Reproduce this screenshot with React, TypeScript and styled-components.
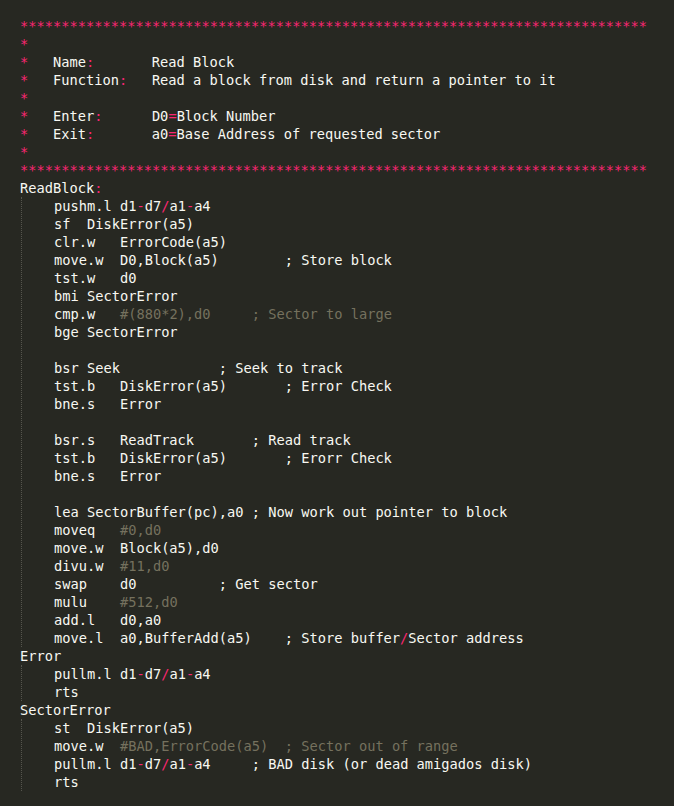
import React from "react";
import styled, { createGlobalStyle } from "styled-components";

const GlobalStyle = createGlobalStyle`
  html, body {
    margin: 0;
    padding: 0;
    background: #272822;
  }
`;

const Editor = styled.div`
  background: #272822;
  min-height: 806px;
  box-sizing: border-box;
  padding: 17px 0 0 20px;
  font-family: "DejaVu Sans Mono", "Liberation Mono", monospace;
  font-size: 13.7px;
  line-height: 18px;
  color: #f8f8f2;
  white-space: pre;
`;

const Line = styled.div`
  height: 18px;
`;

const IndentBlock = styled.div`
  margin-left: 1px;
  padding-left: 32px;
  border-left: 1px dotted #55554d;
`;

const Tok = styled.span<{ $kind: "op" | "comment" | "text" }>`
  color: ${(p) =>
    p.$kind === "op" ? "#f92672" : p.$kind === "comment" ? "#75715e" : "#f8f8f2"};
`;

type Seg = { kind: "op" | "comment" | "text"; text: string };

function tokenize(line: string): Seg[] {
  const segs: Seg[] = [];
  let buf = "";
  const flush = () => {
    if (buf) segs.push({ kind: "text", text: buf });
    buf = "";
  };
  for (let i = 0; i < line.length; i++) {
    const c = line[i];
    if (c === "#") {
      flush();
      segs.push({ kind: "comment", text: line.slice(i) });
      return segs;
    }
    if ("*:=-/".includes(c)) {
      flush();
      segs.push({ kind: "op", text: c });
    } else {
      buf += c;
    }
  }
  flush();
  return segs;
}

const CodeLine: React.FC<{ text: string }> = ({ text }) => (
  <Line>
    {text === ""
      ? " "
      : tokenize(text).map((s, i) => (
          <Tok key={i} $kind={s.kind}>
            {s.text}
          </Tok>
        ))}
  </Line>
);

const stars = "*".repeat(76);

const header = [
  stars,
  "*",
  "*   Name:       Read Block",
  "*   Function:   Read a block from disk and return a pointer to it",
  "*",
  "*   Enter:      D0=Block Number",
  "*   Exit:       a0=Base Address of requested sector",
  "*",
  stars,
];

type Section = { label: string; body: string[] };

const sections: Section[] = [
  {
    label: "ReadBlock:",
    body: [
      "pushm.l d1-d7/a1-a4",
      "sf  DiskError(a5)",
      "clr.w   ErrorCode(a5)",
      "move.w  D0,Block(a5)        ; Store block",
      "tst.w   d0",
      "bmi SectorError",
      "cmp.w   #(880*2),d0     ; Sector to large",
      "bge SectorError",
      "",
      "bsr Seek            ; Seek to track",
      "tst.b   DiskError(a5)       ; Error Check",
      "bne.s   Error",
      "",
      "bsr.s   ReadTrack       ; Read track",
      "tst.b   DiskError(a5)       ; Erorr Check",
      "bne.s   Error",
      "",
      "lea SectorBuffer(pc),a0 ; Now work out pointer to block",
      "moveq   #0,d0",
      "move.w  Block(a5),d0",
      "divu.w  #11,d0",
      "swap    d0          ; Get sector",
      "mulu    #512,d0",
      "add.l   d0,a0",
      "move.l  a0,BufferAdd(a5)    ; Store buffer/Sector address",
    ],
  },
  {
    label: "Error",
    body: ["pullm.l d1-d7/a1-a4", "rts"],
  },
  {
    label: "SectorError",
    body: [
      "st  DiskError(a5)",
      "move.w  #BAD,ErrorCode(a5)  ; Sector out of range",
      "pullm.l d1-d7/a1-a4     ; BAD disk (or dead amigados disk)",
      "rts",
    ],
  },
];

export default function App() {
  return (
    <>
      <GlobalStyle />
      <Editor>
        {header.map((l, i) => (
          <CodeLine key={"h" + i} text={l} />
        ))}
        {sections.map((s) => (
          <React.Fragment key={s.label}>
            <CodeLine text={s.label} />
            <IndentBlock>
              {s.body.map((l, i) => (
                <CodeLine key={i} text={l} />
              ))}
            </IndentBlock>
          </React.Fragment>
        ))}
      </Editor>
    </>
  );
}
